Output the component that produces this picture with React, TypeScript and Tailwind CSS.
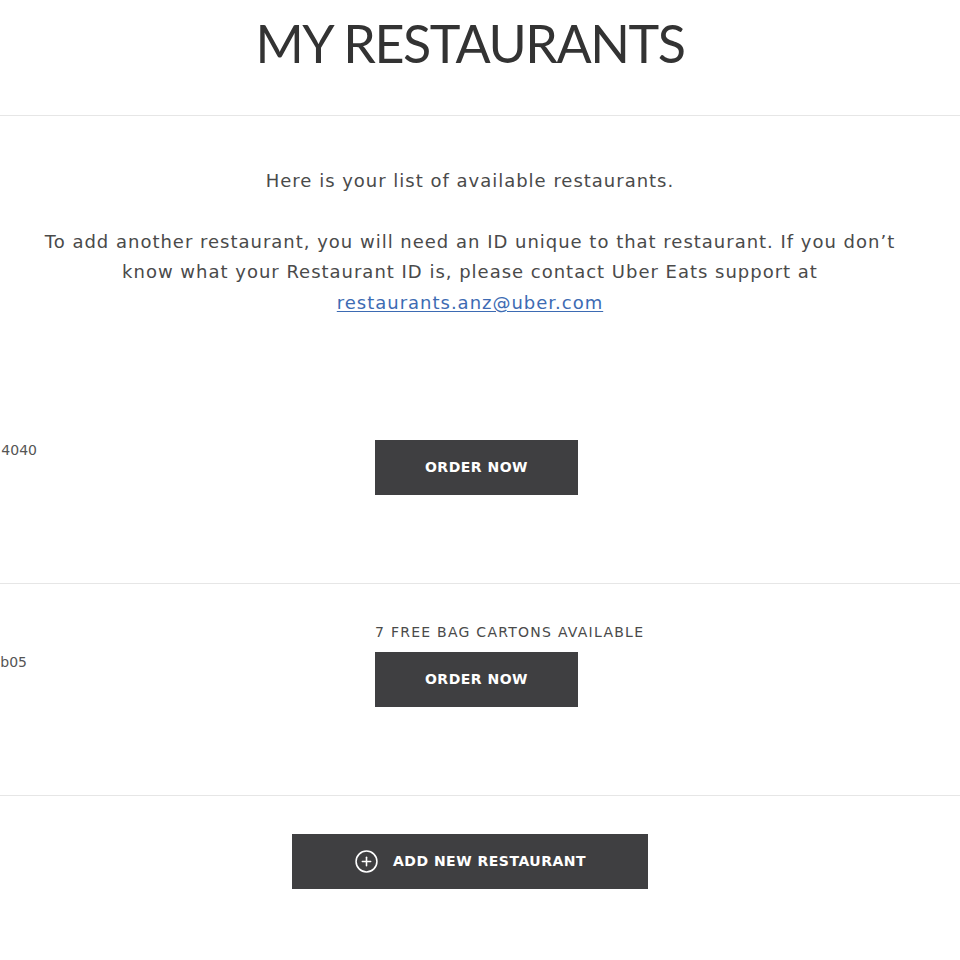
import { CirclePlus } from "lucide-react";

const body = "font-['DejaVu_Sans',sans-serif]";

function RestaurantRow({ id, idBox, note }: { id: string; idBox: string; note?: string }) {
  return (
    <div className="border-b border-[#e6e6e6]">
      <div className="flex pt-[38px] pb-[88px] pr-5">
        {/* left info column, runs off the left edge */}
        <div className="w-[375px] pt-[30px]">
          <div className={`${idBox} overflow-hidden flex justify-end whitespace-nowrap text-[14px] leading-5 text-[#555]`}>
            {id}
          </div>
        </div>
        <div className="flex flex-col">
          <p className="h-5 mb-[10px] text-[14px] leading-5 uppercase tracking-[0.09em] text-[#4a4a4a]">
            {note ?? ""}
          </p>
          <button className="w-[203px] h-[55px] bg-[#3f3f41] text-white text-[14px] font-bold tracking-[0.5px]">
            ORDER NOW
          </button>
        </div>
      </div>
    </div>
  );
}

export default function App() {
  return (
    <div className={`min-h-[960px] bg-white text-[#4a4a4a] overflow-hidden ${body}`}>
      {/* Header */}
      <div className="h-[116px] border-b border-[#e6e6e6] pr-5 flex justify-center">
        <h1 className="pt-[8px] font-['Lato',sans-serif] font-normal text-[52px] leading-[70px] tracking-[-0.027em] text-[#333]">
          MY RESTAURANTS
        </h1>
      </div>

      {/* Intro */}
      <div className="pt-[50px] pb-[54px] pr-5 text-center text-[18px] leading-[30.5px] tracking-[0.055em] text-[#4a4a4a]">
        <p>Here is your list of available restaurants.</p>
        <p className="mt-[30px]">
          To add another restaurant, you will need an ID unique to that restaurant. If you don’t
          <br />
          know what your Restaurant ID is, please contact Uber Eats support at
          <br />
          <a href="#" className="text-[#3d6bb3] underline underline-offset-2">
            restaurants.anz@uber.com
          </a>
        </p>
      </div>

      <RestaurantRow id="4040" idBox="w-[37px]" />
      <RestaurantRow id="b05" idBox="w-[27px]" note="7 free bag cartons available" />

      {/* Add new */}
      <div className="pt-[38px] pb-10 pr-5 flex justify-center">
        <button className="w-[356px] h-[55px] bg-[#3f3f41] text-white flex items-center justify-center gap-[14px]">
          <CirclePlus className="w-[25px] h-[25px]" strokeWidth={1.5} />
          <span className="text-[14px] font-bold tracking-[0.5px]">ADD NEW RESTAURANT</span>
        </button>
      </div>
    </div>
  );
}
